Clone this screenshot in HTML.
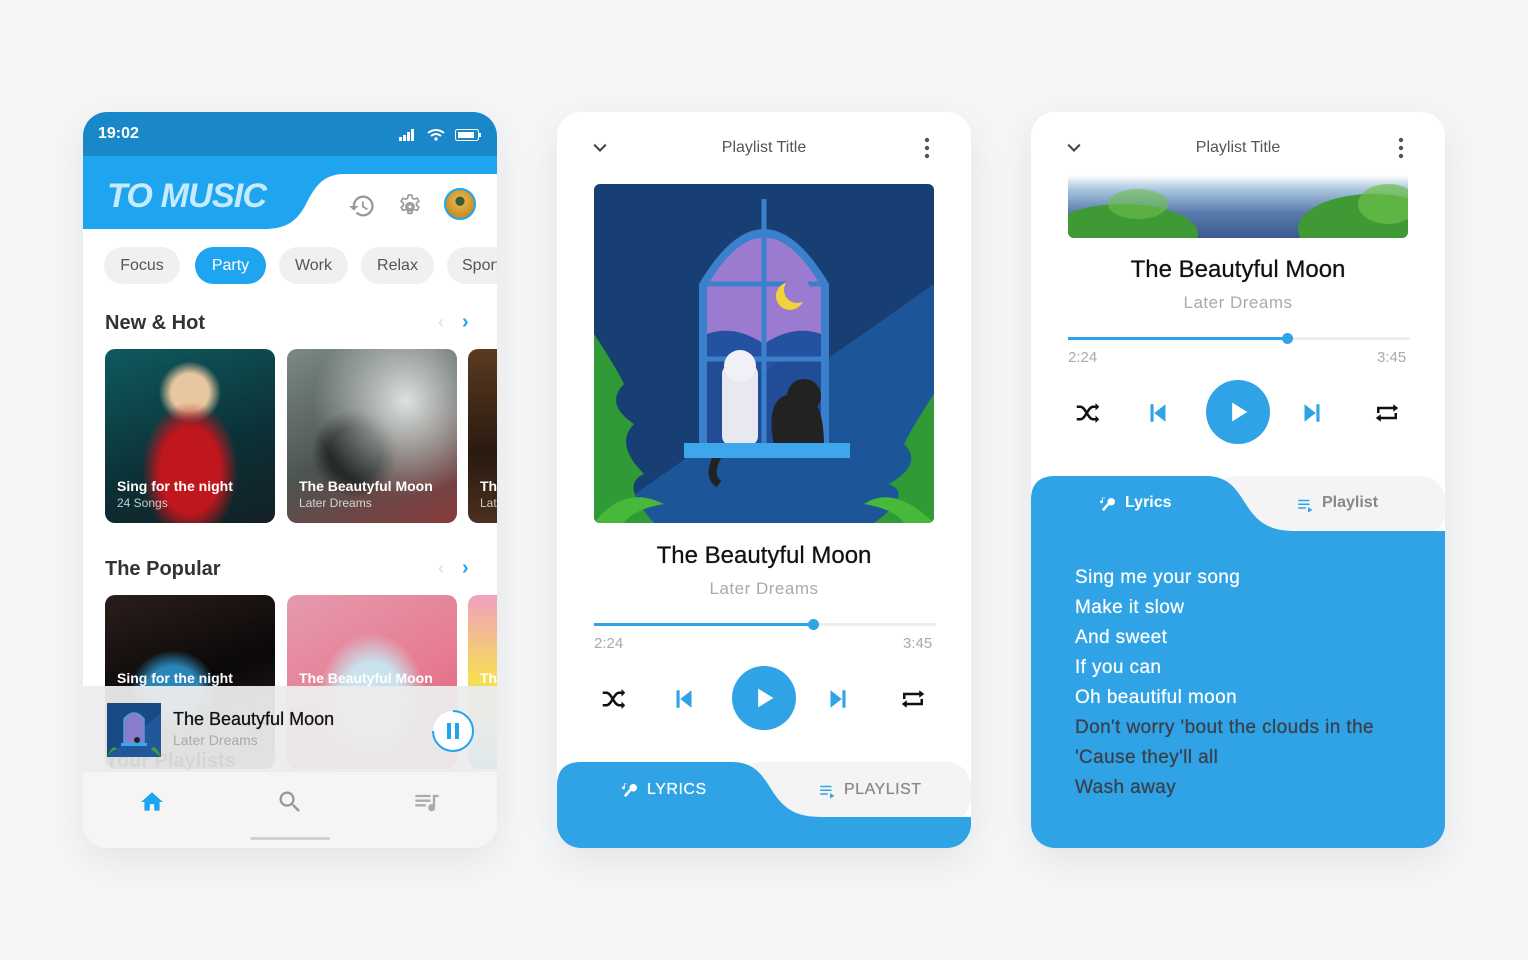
<!DOCTYPE html>
<html><head><meta charset="utf-8"><style>
*{margin:0;padding:0;box-sizing:border-box}
body{width:1528px;height:960px;background:#f5f6f8;font-family:"Liberation Sans",sans-serif;position:relative;overflow:hidden}
.card{position:absolute;top:112px;width:414px;height:736px;background:#fff;border-radius:24px;overflow:hidden;box-shadow:0 12px 40px rgba(0,0,0,0.08)}
.a{position:absolute}
.t{position:absolute;white-space:nowrap}
.chip{position:absolute;top:135px;height:37px;border-radius:19px;background:#f0f0f0;color:#555;font-size:16px;line-height:37px;text-align:center}
.sect{font-size:20px;font-weight:bold;color:#333}
.tile{position:absolute;border-radius:10px;overflow:hidden;width:170px;height:174px}
.tile .n{position:absolute;left:12px;bottom:29px;color:#fff;font-size:14px;font-weight:bold}
.tile .s{position:absolute;left:12px;bottom:13px;color:rgba(255,255,255,.75);font-size:12px}
.center{text-align:center;width:414px;left:0}
.med{text-shadow:0 0 0.6px currentColor}
</style></head><body>

<!-- CARD 1 -->
<div class="card" style="left:83px">
  <div class="a" style="left:0;top:0;width:414px;height:44px;background:#1a87c8"></div>
  <div class="t" style="left:15px;top:13px;color:#fff;font-size:16px;font-weight:bold">19:02</div>
  <svg class="a" style="left:315px;top:16px" width="85" height="14" viewBox="0 0 85 14">
    <rect x="1" y="9" width="3" height="4" fill="#fff"/><rect x="5" y="7" width="3" height="6" fill="#fff"/><rect x="9" y="4" width="3" height="9" fill="#fff"/><rect x="13" y="1" width="3" height="12" fill="#fff"/>
    <path d="M30 5 Q38 -1 46 5 M33 8 Q38 4 43 8" stroke="#fff" stroke-width="2" fill="none"/><circle cx="38" cy="11" r="1.7" fill="#fff"/>
    <rect x="57.5" y="1.5" width="23" height="11" rx="2" stroke="#fff" fill="none"/><rect x="60" y="4" width="16" height="6" fill="#fff"/><rect x="81" y="5" width="2" height="4" fill="#fff"/>
  </svg>
  <svg class="a" style="left:0;top:44px" width="414" height="74" viewBox="0 0 414 74">
    <rect width="414" height="74" fill="#fff"/>
    <path d="M0 0 H414 V18 H262 C240 18 232 30 222 50 C212 68 200 73 180 73 H0 Z" fill="#1fa5ef"/>
  </svg>
  <div class="t" style="left:24px;top:65px;font-size:34px;font-weight:bold;font-style:italic;color:#c6eafe;letter-spacing:-0.8px">TO MUSIC</div>
  <svg class="a" style="left:265px;top:80px" width="28" height="28" viewBox="0 0 24 24"><path d="M13 3a9 9 0 0 0-9 9H1l4 4 4-4H6a7 7 0 1 1 2.05 4.95l-1.42 1.42A9 9 0 1 0 13 3zm-1 5v5l4.25 2.52.77-1.28-3.52-2.09V8z" fill="#999"/></svg>
  <svg class="a" style="left:313px;top:79px" width="28" height="28" viewBox="0 0 24 24"><path d="M12 8.5a3.5 3.5 0 1 0 0 7 3.5 3.5 0 0 0 0-7zm0 1.5a2 2 0 1 1 0 4 2 2 0 0 1 0-4z M10.5 2h3l.5 2.6 1.6.9 2.5-.9 1.5 2.6-2 1.7v1.9l2 1.7-1.5 2.6-2.5-.9-1.6.9-.5 2.6h-3l-.5-2.6-1.6-.9-2.5.9-1.5-2.6 2-1.7V9l-2-1.7 1.5-2.6 2.5.9 1.6-.9z" fill="none" stroke="#999" stroke-width="1.4" transform="translate(0,1.5)"/></svg>
  <div class="a" style="left:361px;top:76px;width:32px;height:32px;border-radius:50%;border:2px solid #1fa5ef;background:radial-gradient(circle at 50% 40%,#3a5a3a 0 20%,#e2b043 22%,#c98d2a 70%)"></div>

  <div class="chip" style="left:21px;width:76px">Focus</div>
  <div class="chip" style="left:112px;width:71px;background:#1fa5ef;color:#fff">Party</div>
  <div class="chip" style="left:196px;width:69px">Work</div>
  <div class="chip" style="left:278px;width:73px">Relax</div>
  <div class="chip" style="left:364px;width:70px;text-align:left;padding-left:15px">Sport</div>

  <div class="t sect" style="left:22px;top:200px">New &amp; Hot</div>
  <div class="t" style="left:355px;top:200px;color:#ddd;font-size:18px">‹</div>
  <div class="t" style="left:379px;top:199px;color:#1fa5ef;font-size:20px;font-weight:bold">›</div>
  <div class="tile" style="left:22px;top:237px;background:radial-gradient(ellipse at 50% 70%,#c0161d 0 25%,transparent 40%),radial-gradient(circle at 50% 25%,#e8c7a0 0 12%,transparent 20%),linear-gradient(160deg,#0f5a5e,#0b3036 60%,#132024)">
    <div class="n">Sing for the night</div><div class="s">24 Songs</div></div>
  <div class="tile" style="left:204px;top:237px;background:radial-gradient(ellipse at 70% 30%,#dfe2e0,transparent 55%),radial-gradient(ellipse at 40% 60%,#262a28 0 18%,transparent 30%),linear-gradient(150deg,#7c8a86,#4c5450 50%,#8a3a3c)">
    <div class="n">The Beautyful Moon</div><div class="s">Later Dreams</div></div>
  <div class="tile" style="left:385px;top:237px;background:linear-gradient(180deg,#5a3a20,#2a1a10 60%,#4a3020)">
    <div class="n">The</div><div class="s">Later</div></div>

  <div class="t sect" style="left:22px;top:446px">The Popular</div>
  <div class="t" style="left:355px;top:446px;color:#ddd;font-size:18px">‹</div>
  <div class="t" style="left:379px;top:445px;color:#1fa5ef;font-size:20px;font-weight:bold">›</div>
  <div class="tile" style="left:22px;top:483px;background:radial-gradient(ellipse at 40% 55%,#2a86b8 0 18%,transparent 30%),linear-gradient(160deg,#2b1e1c,#0a0808 50%,#3a2a28)">
    <div class="n" style="bottom:auto;top:75px">Sing for the night</div></div>
  <div class="tile" style="left:204px;top:483px;background:radial-gradient(ellipse at 50% 60%,#c9e2ec 0 25%,transparent 45%),linear-gradient(150deg,#e59aae,#e7798f 60%,#d05a70)">
    <div class="n" style="bottom:auto;top:75px">The Beautyful Moon</div></div>
  <div class="tile" style="left:385px;top:483px;background:linear-gradient(180deg,#f0a0c0,#f6e050 50%,#1aa0e0)">
    <div class="n" style="bottom:auto;top:75px">The</div></div>

  <!-- mini player -->
  <div class="a" style="left:0;top:574px;width:414px;height:85px;background:rgba(236,236,236,0.95)"></div>
  <div class="t" style="left:22px;top:638px;font-size:20px;font-weight:bold;color:rgba(0,0,0,0.05)">Your Playlists</div>
  <svg class="a" style="left:24px;top:591px" width="54" height="54" viewBox="0 0 54 54">
    <rect width="54" height="54" fill="#1a4a86"/><path d="M0 54 L54 10 V54Z" fill="#22579a"/>
    <path d="M17 40 V16 Q27 4 37 16 V40Z" fill="#8a7bcc" stroke="#4aa0e0" stroke-width="1.5"/>
    <rect x="14" y="40" width="26" height="3" fill="#3ea6ea"/><path d="M0 54 Q6 40 10 46 Q4 48 0 54Z M54 54 Q48 40 44 46Z" fill="#3ba33a"/>
    <circle cx="30" cy="37" r="3" fill="#222"/>
  </svg>
  <div class="t med" style="left:90px;top:597px;font-size:18px;color:#111">The Beautyful Moon</div>
  <div class="t" style="left:90px;top:620px;font-size:14px;color:#aaa">Later Dreams</div>
  <svg class="a" style="left:348px;top:597px" width="44" height="44" viewBox="0 0 44 44">
    <circle cx="22" cy="22" r="20" fill="#fff"/>
    <path d="M22 2 A20 20 0 1 1 2 22" stroke="#1fa5ef" stroke-width="2" fill="none"/>
    <rect x="16" y="14" width="4" height="16" fill="#1fa5ef"/><rect x="24" y="14" width="4" height="16" fill="#1fa5ef"/>
  </svg>
  <!-- nav -->
  <div class="a" style="left:0;top:659px;width:414px;height:77px;background:#f5f5f5;border-top:1px solid #ececec"></div>
  <svg class="a" style="left:56px;top:677px" width="26" height="26" viewBox="0 0 24 24"><path d="M12 3 2 12h3v8h5v-6h4v6h5v-8h3z" fill="#1fa5ef"/></svg>
  <svg class="a" style="left:193px;top:676px" width="28" height="28" viewBox="0 0 24 24"><path d="M15.5 14h-.79l-.28-.27A6.47 6.47 0 0 0 16 9.5 6.5 6.5 0 1 0 9.5 16c1.61 0 3.09-.59 4.230-1.57l.27.28v.79l5 4.99L20.49 19l-4.99-5zm-6 0C7.01 14 5 11.99 5 9.5S7.01 5 9.5 5 14 7.01 14 9.5 11.99 14 9.5 14z" fill="#999"/></svg>
  <svg class="a" style="left:330px;top:677px" width="28" height="28" viewBox="0 0 24 24"><path d="M2 5h13v2H2zm0 4h13v2H2zm0 4h9v2H2zm15-8h5v2h-3v9a3 3 0 1 1-2-2.8z" fill="#aaa"/></svg>
  <div class="a" style="left:167px;top:725px;width:80px;height:3px;border-radius:2px;background:#d0d0d0"></div>
</div>

<!-- CARD 2 -->
<div class="card" style="left:557px">
  <svg class="a" style="left:33px;top:26px" width="20" height="20" viewBox="0 0 24 24"><path d="M5 8l7 7 7-7" stroke="#444" stroke-width="2.5" fill="none"/></svg>
  <div class="t center" style="top:27px;font-size:16px;color:#555">Playlist Title</div>
  <svg class="a" style="left:366px;top:25px" width="8" height="24"><circle cx="4" cy="3" r="2.2" fill="#555"/><circle cx="4" cy="11" r="2.2" fill="#555"/><circle cx="4" cy="19" r="2.2" fill="#555"/></svg>
  <svg class="a" style="left:37px;top:72px;border-radius:6px" width="340" height="339" viewBox="0 0 340 339">
    <rect width="340" height="339" fill="#173f74"/>
    <path d="M0 339 L340 100 V339Z" fill="#1d5698"/>
    <path d="M105 270 V100 Q170 -10 235 100 V270Z" fill="#3a80cc"/>
    <path d="M113 262 V102 Q170 5 227 102 V262Z" fill="#9b7bd0"/>
    <path d="M113 150 Q140 140 170 160 Q200 140 227 150 V262 H113Z" fill="#2552a0"/>
    <path d="M113 175 Q150 168 170 190 Q190 168 227 175 V262 H113Z" fill="#1e4b8f" opacity=".6"/>
    <path d="M170 15 V262 M113 100 H227 M113 175 H227" stroke="#3a80cc" stroke-width="5"/>
    <circle cx="196" cy="112" r="14" fill="#f4d23a"/><circle cx="203" cy="106" r="13" fill="#9b7bd0"/>
    <rect x="128" y="180" width="36" height="82" rx="10" fill="#e8e8f0"/><circle cx="146" cy="182" r="16" fill="#f0f0f6"/>
    <path d="M180 262 Q170 210 200 210 Q230 205 230 262Z" fill="#222"/><circle cx="210" cy="212" r="17" fill="#222"/>
    <path d="M130 262 Q110 290 125 300" stroke="#222" stroke-width="8" fill="none"/>
    <rect x="90" y="259" width="166" height="15" fill="#3ea6ea"/>
    <path d="M0 339 V150 Q20 180 30 200 Q10 220 40 240 Q20 260 50 290 Q25 300 60 339Z" fill="#2f9a36"/>
    <path d="M340 339 V210 Q320 240 310 260 Q330 280 295 300 Q320 310 280 339Z" fill="#2f9a36"/>
    <path d="M0 339 Q30 300 70 320 Q40 325 30 339Z M340 339 Q300 300 270 320 Q300 325 310 339Z" fill="#47b83a"/>
  </svg>
  <div class="t center med" style="top:430px;font-size:24px;color:#111">The Beautyful Moon</div>
  <div class="t center" style="top:467px;font-size:17px;color:#aaa;letter-spacing:.5px">Later Dreams</div>
  <div class="a" style="left:37px;top:511px;width:342px;height:3px;background:#eee"></div>
  <div class="a" style="left:37px;top:511px;width:220px;height:3px;background:#2fa3e6"></div>
  <div class="a" style="left:251px;top:507px;width:11px;height:11px;border-radius:50%;background:#2fa3e6"></div>
  <div class="t" style="left:37px;top:523px;font-size:15px;color:#aaa">2:24</div>
  <div class="t" style="left:346px;top:523px;font-size:15px;color:#aaa">3:45</div>
  <svg class="a" style="left:42px;top:572px" width="30" height="30" viewBox="0 0 24 24"><path d="M3 7h3c4 0 6 10 10 10h4M3 17h3c4 0 6-10 10-10h4" stroke="#111" stroke-width="2" fill="none"/><path d="M18 4l3 3-3 3zM18 14l3 3-3 3z" fill="#111"/></svg>
  <svg class="a" style="left:112px;top:572px" width="30" height="30" viewBox="0 0 24 24"><path d="M6 5h2.5v14H6zm3 7 9-7v14z" fill="#2fa3e6"/></svg>
  <div class="a" style="left:175px;top:554px;width:64px;height:64px;border-radius:50%;background:#2fa3e6"></div>
  <svg class="a" style="left:193px;top:572px" width="28" height="28" viewBox="0 0 24 24"><path d="M7 4v16l13-8z" fill="#fff"/></svg>
  <svg class="a" style="left:266px;top:572px" width="30" height="30" viewBox="0 0 24 24"><path d="M6 5l9 7-9 7zm9.5 0H18v14h-2.5z" fill="#2fa3e6"/></svg>
  <svg class="a" style="left:341px;top:572px" width="30" height="30" viewBox="0 0 24 24"><path d="M5 12V8h14M19 12v4H5" stroke="#111" stroke-width="2" fill="none"/><path d="M17 5l4 3-4 3zM7 13l-4 3 4 3z" fill="#111"/></svg>
  <svg class="a" style="left:0;top:650px" width="414" height="86" viewBox="0 0 414 86">
    <rect x="180" y="0" width="234" height="60" rx="24" fill="#f4f4f4"/>
    <path d="M0 24 Q0 0 24 0 H175 C198 0 206 14 216 30 C228 48 240 55 265 55 H414 V86 H0Z" fill="#2fa3e6"/>
  </svg>
  <svg class="a" style="left:65px;top:669px" width="18" height="18" viewBox="0 0 24 24"><circle cx="15" cy="9" r="5" fill="#fff"/><path d="M12 12 5 20l-1-1 7-8z" fill="#fff" stroke="#fff" stroke-width="2"/><path d="M4 3v6a2 2 0 1 1-1-1.7V3h3v2z" fill="#fff"/></svg>
  <div class="t med" style="left:90px;top:669px;font-size:16px;color:#fff;letter-spacing:.5px">LYRICS</div>
  <svg class="a" style="left:261px;top:670px" width="18" height="18" viewBox="0 0 24 24"><path d="M3 5h15v2H3zm0 5h15v2H3zm0 5h10v2H3zm13 0 6 3.5-6 3.5z" fill="#2fa3e6"/></svg>
  <div class="t med" style="left:287px;top:669px;font-size:16px;color:#888;letter-spacing:.5px">PLAYLIST</div>
</div>

<!-- CARD 3 -->
<div class="card" style="left:1031px">
  <div class="a" style="left:37px;top:62px;width:340px;height:64px;border-radius:0 0 6px 6px;background:linear-gradient(180deg,#fff 0%,#a8c4dc 25%,#5a7cae 60%,#3a5a90);overflow:hidden">
    <div class="a" style="left:-20px;top:30px;width:150px;height:60px;border-radius:50%;background:#3f9a35"></div>
    <div class="a" style="left:230px;top:20px;width:150px;height:70px;border-radius:50%;background:#3f9a35"></div>
    <div class="a" style="left:290px;top:10px;width:60px;height:40px;border-radius:50%;background:#6cc04a;opacity:.7"></div>
    <div class="a" style="left:40px;top:15px;width:60px;height:30px;border-radius:50%;background:#6cc04a;opacity:.6"></div>
  </div>
  <div class="a" style="left:0;top:56px;width:414px;height:14px;background:linear-gradient(#fff,rgba(255,255,255,0))"></div>
  <svg class="a" style="left:33px;top:26px" width="20" height="20" viewBox="0 0 24 24"><path d="M5 8l7 7 7-7" stroke="#444" stroke-width="2.5" fill="none"/></svg>
  <div class="t center" style="top:27px;font-size:16px;color:#555">Playlist Title</div>
  <svg class="a" style="left:366px;top:25px" width="8" height="24"><circle cx="4" cy="3" r="2.2" fill="#555"/><circle cx="4" cy="11" r="2.2" fill="#555"/><circle cx="4" cy="19" r="2.2" fill="#555"/></svg>
  <div class="t center med" style="top:144px;font-size:24px;color:#111">The Beautyful Moon</div>
  <div class="t center" style="top:181px;font-size:17px;color:#aaa;letter-spacing:.5px">Later Dreams</div>
  <div class="a" style="left:37px;top:225px;width:342px;height:3px;background:#eee"></div>
  <div class="a" style="left:37px;top:225px;width:220px;height:3px;background:#2fa3e6"></div>
  <div class="a" style="left:251px;top:221px;width:11px;height:11px;border-radius:50%;background:#2fa3e6"></div>
  <div class="t" style="left:37px;top:237px;font-size:15px;color:#aaa">2:24</div>
  <div class="t" style="left:346px;top:237px;font-size:15px;color:#aaa">3:45</div>
  <svg class="a" style="left:42px;top:286px" width="30" height="30" viewBox="0 0 24 24"><path d="M3 7h3c4 0 6 10 10 10h4M3 17h3c4 0 6-10 10-10h4" stroke="#111" stroke-width="2" fill="none"/><path d="M18 4l3 3-3 3zM18 14l3 3-3 3z" fill="#111"/></svg>
  <svg class="a" style="left:112px;top:286px" width="30" height="30" viewBox="0 0 24 24"><path d="M6 5h2.5v14H6zm3 7 9-7v14z" fill="#2fa3e6"/></svg>
  <div class="a" style="left:175px;top:268px;width:64px;height:64px;border-radius:50%;background:#2fa3e6"></div>
  <svg class="a" style="left:193px;top:286px" width="28" height="28" viewBox="0 0 24 24"><path d="M7 4v16l13-8z" fill="#fff"/></svg>
  <svg class="a" style="left:266px;top:286px" width="30" height="30" viewBox="0 0 24 24"><path d="M6 5l9 7-9 7zm9.5 0H18v14h-2.5z" fill="#2fa3e6"/></svg>
  <svg class="a" style="left:341px;top:286px" width="30" height="30" viewBox="0 0 24 24"><path d="M5 12V8h14M19 12v4H5" stroke="#111" stroke-width="2" fill="none"/><path d="M17 5l4 3-4 3zM7 13l-4 3 4 3z" fill="#111"/></svg>
  <svg class="a" style="left:0;top:364px" width="414" height="372" viewBox="0 0 414 372">
    <rect x="180" y="0" width="234" height="60" rx="24" fill="#f4f4f4"/>
    <path d="M0 24 Q0 0 24 0 H175 C198 0 206 14 216 30 C228 48 240 55 265 55 H414 V372 H0Z" fill="#2fa3e6"/>
  </svg>
  <svg class="a" style="left:69px;top:383px" width="18" height="18" viewBox="0 0 24 24"><circle cx="15" cy="9" r="5" fill="#fff"/><path d="M12 12 5 20l-1-1 7-8z" fill="#fff" stroke="#fff" stroke-width="2"/><path d="M4 3v6a2 2 0 1 1-1-1.7V3h3v2z" fill="#fff"/></svg>
  <div class="t" style="left:94px;top:382px;font-size:16px;color:#fff;font-weight:bold">Lyrics</div>
  <svg class="a" style="left:265px;top:384px" width="18" height="18" viewBox="0 0 24 24"><path d="M3 5h15v2H3zm0 5h15v2H3zm0 5h10v2H3zm13 0 6 3.5-6 3.5z" fill="#2fa3e6"/></svg>
  <div class="t" style="left:291px;top:382px;font-size:16px;color:#888;font-weight:bold">Playlist</div>
  <div class="a med" style="left:44px;top:451px;font-size:19px;line-height:30px;color:#fff;letter-spacing:.4px">
    Sing me your song<br>Make it slow<br>And sweet<br>If you can<br>Oh beautiful moon<br>
    <span style="color:#3b3f48">Don't worry 'bout the clouds in the<br>'Cause they'll all<br>Wash away</span>
  </div>
</div>
</body></html>
